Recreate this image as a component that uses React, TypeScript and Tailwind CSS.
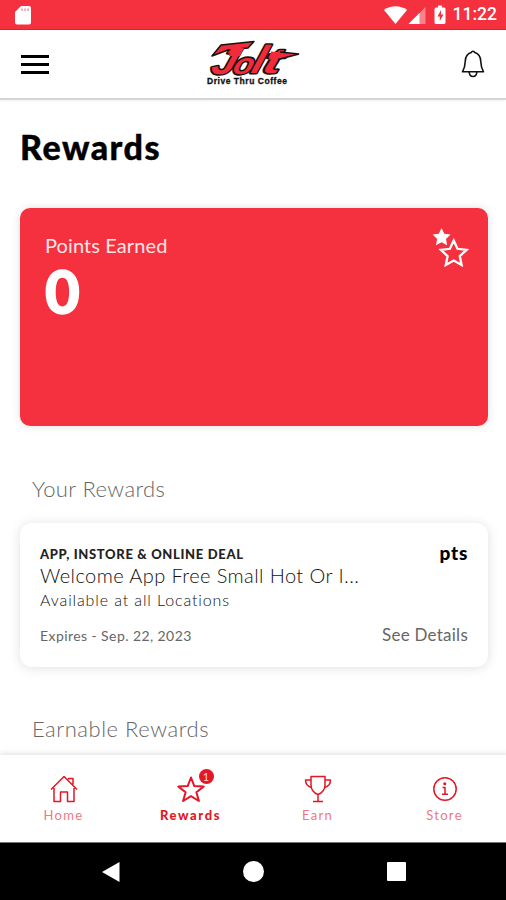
import type { ReactNode } from "react";

function StatusBar() {
  return (
    <div className="flex h-[30px] shrink-0 items-center justify-between border-b border-[#ec1c2e] bg-[#f5303f] pr-[9px] pl-[14px] text-white">
      <svg width="18" height="22" viewBox="0 0 18 22" fill="currentColor">
        <path d="M7 2h8a2 2 0 0 1 2 2v14.500a2 2 0 0 1-2 2H3a2 2 0 0 1-2-2V8z" />
        <path d="M8 4.500v2.500M11 4.500v2.500M14 4.500v2.500" stroke="#f5303f" strokeWidth=".8" />
      </svg>
      <div className="flex items-center">
        <svg width="76" height="22" viewBox="0 0 76 22" fill="currentColor">
          <path d="M1 6C7.500 1 17.500 1 24 6L12.500 20z" />
          <path d="M25.500 20 42.500 3v17z" opacity=".4" />
          <path d="M25.500 20 36.500 9v11z" />
          <path d="M55 1.500h4V3.500h2a1.500 1.500 0 0 1 1.500 1.500v13.500a1.500 1.500 0 0 1-1.500 1.500h-8a1.500 1.500 0 0 1-1.500-1.500V5a1.500 1.500 0 0 1 1.500-1.500h2z" />
          <path d="m58 6-3.500 6.500h2.300v4.500l3.700-6.500h-2.500z" fill="#f5303f" />
        </svg>
        <span className="-ml-1.5 pt-px font-[Roboto] text-[17.5px] leading-none font-medium">11:22</span>
      </div>
    </div>
  );
}

function Logo() {
  return (
    <svg width="104" height="60" viewBox="-3 -5 104 60" role="img" aria-label="Jolt Drive Thru Coffee" className="overflow-visible">
      <g
        transform="translate(0 36) skewX(-18)"
        fontFamily="'Liberation Sans', sans-serif"
        fontWeight="700"
        fontStyle="italic"
        fill="#f12b39"
        stroke="#171112"
        strokeWidth="3"
        strokeLinejoin="round"
        paintOrder="stroke"
      >
        <text x="5" y="-1" fontSize="36" textLength="24" lengthAdjust="spacingAndGlyphs">J</text>
        <text x="27" y="-1" fontSize="30" textLength="20" lengthAdjust="spacingAndGlyphs">o</text>
        <text x="45" y="-2" fontSize="39" textLength="12" lengthAdjust="spacingAndGlyphs">l</text>
        <text x="56" y="-2" fontSize="35" textLength="18" lengthAdjust="spacingAndGlyphs">t</text>
      </g>
      <path d="M8 17 17 6 50 2.500 44 9 24 11z" fill="#f12b39" stroke="#171112" strokeWidth="1.500" strokeLinejoin="round" />
      <path d="M27 9h13l-4 8H25z" fill="#f12b39" />
      <path d="M67 12.500 95 15 74 20.500H65z" fill="#f12b39" />
      <path d="M76 13 95 15 74 20.500" fill="none" stroke="#171112" strokeWidth="1.500" />
      <text x="3" y="44.500" fontSize="8.500" fontWeight="700" fontFamily="'Liberation Sans', sans-serif" textLength="80" fill="#111" stroke="#111" strokeWidth=".3">
        Drive Thru Coffee
      </text>
    </svg>
  );
}

function Header() {
  return (
    <header className="grid h-[70px] shrink-0 grid-cols-3 items-center border-b-2 border-[#d5d5d5] bg-white pr-[21px] pl-[21px] shadow-[0_1px_3px_#0000000d]">
      <button aria-label="Menu" className="flex w-7 flex-col gap-[5px]">
        <span className="h-[3px] bg-black" />
        <span className="h-[3px] bg-black" />
        <span className="h-[3px] bg-black" />
      </button>
      <div className="flex justify-center">
        <Logo />
      </div>
      <button aria-label="Notifications" className="justify-self-end">
        <svg width="24" height="28" viewBox="0 0 24 28" fill="none" stroke="#111" strokeWidth="1.600" strokeLinejoin="round">
          <path d="M12 1.200c-1 0-1.500.6-1.800 1.400C6.500 3.700 4.500 7 4.300 11c-.2 5-.8 7.500-2.800 10.800h21C20.500 18.500 19.900 16 19.700 11c-.2-4-2.200-7.300-5.900-8.400-.3-.8-.8-1.400-1.800-1.400z" />
          <path d="M8.200 22c.3 6 7.300 6 7.600 0" />
        </svg>
      </button>
    </header>
  );
}

function PointsCard() {
  return (
    <section className="flex h-[218px] items-start justify-between rounded-[10px] bg-[#f5303f] pt-[24px] pr-[19px] pl-[25px] text-white shadow-[0_0_10px_#00000020]">
      <div>
        <p className="text-[20px] leading-[26px] tracking-[0.1px] text-[#ffe5e7]">Points Earned</p>
        <p className="-mt-0.5 text-[60px] leading-[70px] font-black [-webkit-text-stroke:1.5px_white]">0</p>
      </div>
      <svg width="38" height="40" viewBox="0 0 38 40" className="-mt-[5px]" fill="none" stroke="#fff">
        <path d="m10.500 1 2.800 5.700 6.200.9-4.500 4.400 1.100 6.200-5.600-2.900-5.500 2.900L6.100 12 1.600 7.600l6.200-.9z" fill="#fff" stroke="none" />
        <path d="m22.700 13.500 3.800 8.300 9 1.100-6.700 6.200 1.800 8.900-7.900-4.500-7.900 4.500 1.800-8.900-6.700-6.200 9-1.100z" strokeWidth="2.300" />
      </svg>
    </section>
  );
}

function RewardCard() {
  return (
    <article className="flex h-[144px] justify-between rounded-[12px] bg-white px-5 pt-[21px] shadow-[0_1px_12px_#00000020]">
      <div>
        <p className="text-[13px] leading-5 font-black tracking-[0.66px] text-[#222]">APP, INSTORE &amp; ONLINE DEAL</p>
        <h3 className="-mt-px text-[20px] leading-6 font-light tracking-[0.42px] text-[#111]">Welcome App Free Small Hot Or I...</h3>
        <p className="mt-px text-[16px] leading-6 font-light tracking-[0.88px] text-[#111]">Available at all Locations</p>
        <p className="mt-[14px] text-[14px] leading-5 tracking-[0.42px] text-[#666]">Expires - Sep. 22, 2023</p>
      </div>
      <div className="flex flex-col items-end">
        <p className="-mt-px -mr-[0.4px] text-[19px] leading-5 font-black tracking-[0.9px] text-black">pts</p>
        <button className="mt-[60px] text-[17px] leading-6 tracking-[0.25px] text-[#666]">See Details</button>
      </div>
    </article>
  );
}

const HomeIcon = <path d="M1 14.500 14 1.500l13 13M4 13v13.500h6.500V17h7v9.500H24V13M18.500 4.500V3.500h4.500v6" />;

const StarIcon = <path d="m14 2.500 3.300 8.600 9.300.5-7.200 5.600 2.500 8.800L14 21.200 6.100 26l2.500-8.800-7.200-5.600 9.300-.5z" strokeWidth="2" />;

const TrophyIcon = (
  <path d="M7 1.500h14V10c0 5-3 8-7 9.500C10 18 7 15 7 10zM7 5H1.500c0 4 2 6.500 6 7.500M21 5h5.500c0 4-2 6.500-6 7.500M14 19.500v6.500M9 26.500h10" />
);

const InfoIcon = (
  <>
    <circle cx="14" cy="14" r="11.200" />
    <path d="M11.500 12.500h2.500v6.500M11 19.300h6" strokeWidth="1.500" />
    <circle cx="13.800" cy="8.800" r=".8" fill="currentColor" />
  </>
);

type Tab = { label: string; icon: ReactNode; active?: boolean; badge?: number };

const tabs: Tab[] = [
  { label: "Home", icon: HomeIcon },
  { label: "Rewards", icon: StarIcon, active: true, badge: 1 },
  { label: "Earn", icon: TrophyIcon },
  { label: "Store", icon: InfoIcon },
];

function TabBar() {
  return (
    <nav className="z-10 -mr-0.5 grid h-[87px] shrink-0 grid-cols-4 bg-white pt-5 shadow-[0_-1px_6px_#00000025]">
      {tabs.map((tab) => (
        <button key={tab.label} className="flex flex-col items-center text-[#e51625]">
          <span className="relative">
            <svg width="28" height="28" viewBox="0 0 28 28" fill="none" stroke="currentColor" strokeWidth="1.500" strokeLinejoin="round">
              {tab.icon}
            </svg>
            {tab.badge && (
              <span className="absolute -top-[6px] -right-[9px] flex size-[15px] items-center justify-center rounded-full bg-[#e51625] text-[11px] leading-none text-[#ffd5d8]">
                {tab.badge}
              </span>
            )}
          </span>
          <span
            className={
              tab.active
                ? "mt-[3px] text-[13px] leading-[18px] font-black tracking-[1.6px]"
                : "mt-[3px] text-[13px] leading-[18px] tracking-[1.3px] text-[#ee7883]"
            }
          >
            {tab.label}
          </span>
        </button>
      ))}
    </nav>
  );
}

function AndroidNav() {
  return (
    <div className="z-10 flex h-[58px] shrink-0 items-center justify-between border-t border-[#777] bg-black pr-[100px] pl-[101px]">
      <svg width="20" height="22" viewBox="0 0 20 22" fill="#fff">
        <path d="M1 11 18.500 1v20z" />
      </svg>
      <span className="-ml-px size-[21px] rounded-full bg-white" />
      <span className="size-[19px] rounded-[1px] bg-white" />
    </div>
  );
}

export default function App() {
  return (
    <div className="flex h-[900px] w-[506px] flex-col overflow-hidden bg-white font-[Lato,sans-serif]">
      <StatusBar />
      <Header />
      <main className="min-h-0 flex-1 overflow-hidden pr-[18px] pl-5">
        <h1 className="mt-[27px] text-[34px] leading-10 font-black tracking-[1.5px] text-black [-webkit-text-stroke:0.4px_black]">Rewards</h1>
        <div className="mt-[41px]">
          <PointsCard />
        </div>
        <h2 className="mt-[48px] mb-[19px] pl-3 text-[22px] leading-[30px] font-light tracking-[0.4px] text-[#666]">Your Rewards</h2>
        <RewardCard />
        <h2 className="mt-[47px] pl-3 text-[22px] leading-[30px] font-light tracking-[0.55px] text-[#666]">Earnable Rewards</h2>
      </main>
      <TabBar />
      <AndroidNav />
    </div>
  );
}
